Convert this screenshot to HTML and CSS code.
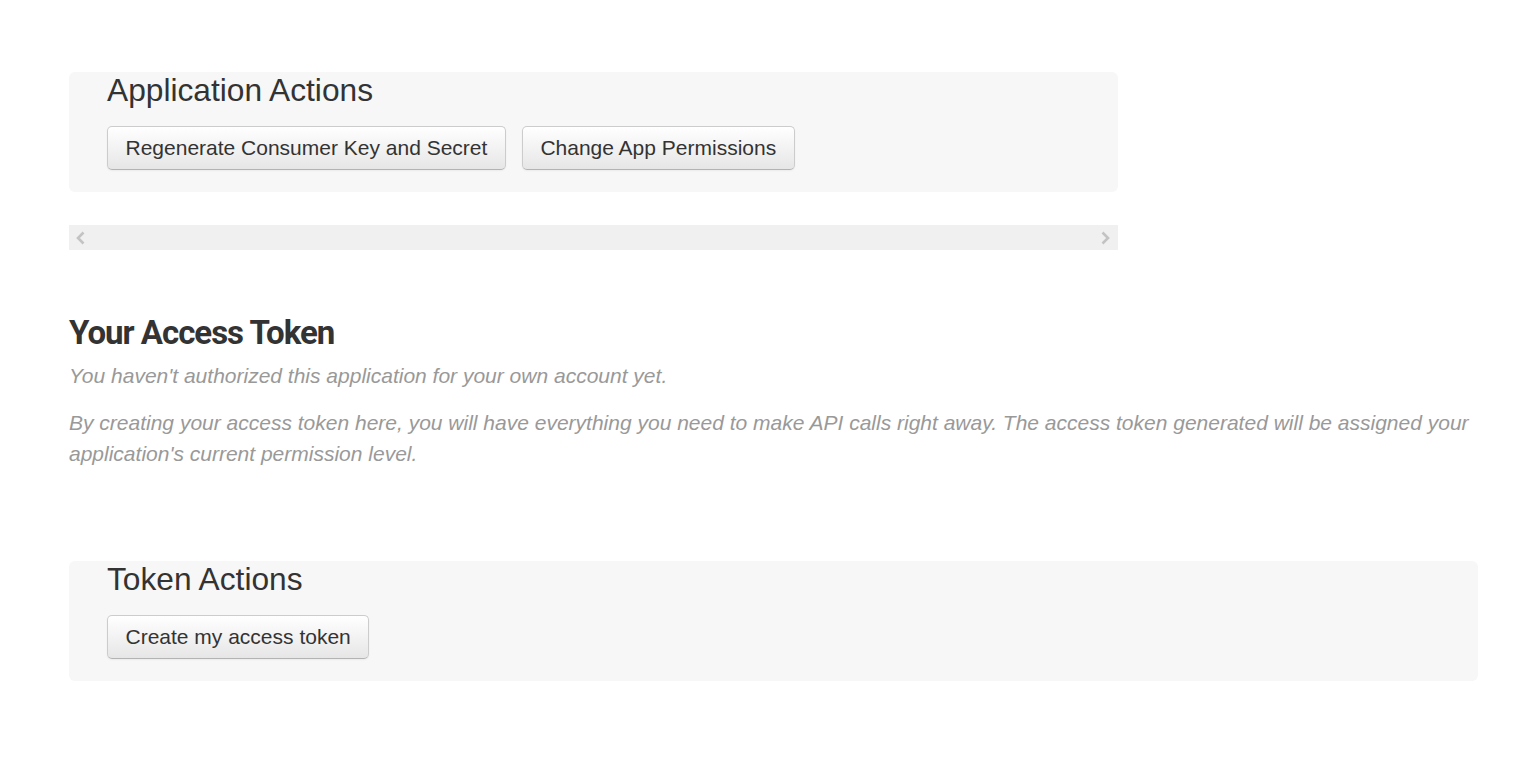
FILE: index.html
```html
<!DOCTYPE html>
<html lang="en">
<head>
<meta charset="utf-8">
<title>Application Settings</title>
<link rel="stylesheet" href="styles.css">
</head>
<body>
<main class="page">
  <section class="app-area">
    <div class="actions-panel">
      <h3 class="panel-title">Application Actions</h3>
      <div class="btn-row">
        <button class="btn" type="button">Regenerate Consumer Key and Secret</button>
        <button class="btn" type="button">Change App Permissions</button>
      </div>
    </div>
    <div class="hscroll">
      <svg class="arrow" width="11" height="14" viewBox="0 0 11 14"><path d="M8.5 1.5 L3 7 L8.5 12.5" fill="none" stroke="#c3c3c3" stroke-width="2.6"/></svg>
      <svg class="arrow" width="11" height="14" viewBox="0 0 11 14"><path d="M2.5 1.5 L8 7 L2.5 12.5" fill="none" stroke="#c3c3c3" stroke-width="2.6"/></svg>
    </div>
  </section>

  <section class="token-section">
    <h2 class="section-title">Your Access Token</h2>
    <p class="note">You haven't authorized this application for your own account yet.</p>
    <p class="note">By creating your access token here, you will have everything you need to make API calls right away. The access token generated will be assigned your application's current permission level.</p>
  </section>

  <div class="actions-panel wide">
    <h3 class="panel-title">Token Actions</h3>
    <div class="btn-row">
      <button class="btn" type="button">Create my access token</button>
    </div>
  </div>
</main>
</body>
</html>
```

FILE: styles.css
```css
html, body {
  margin: 0;
  padding: 0;
  background: #ffffff;
}

body {
  font-family: "Liberation Sans", Arial, sans-serif;
  color: #333333;
}

.page {
  padding: 72px 61px 0 69px;
  display: flex;
  flex-direction: column;
}

.app-area {
  width: 1049px;
  display: flex;
  flex-direction: column;
  gap: 33px;
}

.actions-panel {
  background: #f7f7f7;
  border-radius: 6px;
  padding: 0 38px 22px 38px;
  display: flex;
  flex-direction: column;
}

.actions-panel.wide {
  width: 1409px;
  box-sizing: border-box;
  margin-top: 92px;
}

.panel-title {
  margin: 0;
  font-weight: normal;
  font-size: 31.7px;
  line-height: 37px;
  color: #333333;
}

.btn-row {
  display: flex;
  gap: 16px;
  margin-top: 17px;
}

.btn {
  font-family: "Liberation Sans", Arial, sans-serif;
  font-size: 21px;
  color: #333333;
  height: 44px;
  padding: 0 17.5px;
  border: 1px solid #cccccc;
  border-bottom-color: #b3b3b3;
  border-radius: 5px;
  background: linear-gradient(to bottom, #ffffff 0%, #e6e6e6 100%);
  box-shadow: inset 0 1px 0 rgba(255,255,255,0.2), 0 1px 2px rgba(0,0,0,0.05);
  cursor: pointer;
}

.hscroll {
  height: 25px;
  background: #f0f0f0;
  display: flex;
  align-items: center;
  justify-content: space-between;
  padding: 0 7px 0 6px;
}

.arrow {
  display: block;
}

.token-section {
  margin-top: 63px;
}

.section-title {
  margin: 0 0 7px 0;
  font-family: Roboto, "Liberation Sans", sans-serif;
  font-weight: 700;
  font-size: 33px;
  line-height: 40px;
  letter-spacing: -1px;
  color: #333333;
}

.note {
  margin: 0 0 16px 0;
  font-style: italic;
  font-size: 21px;
  line-height: 31px;
  color: #999999;
}

.note:last-child {
  margin-bottom: 0;
}
```
